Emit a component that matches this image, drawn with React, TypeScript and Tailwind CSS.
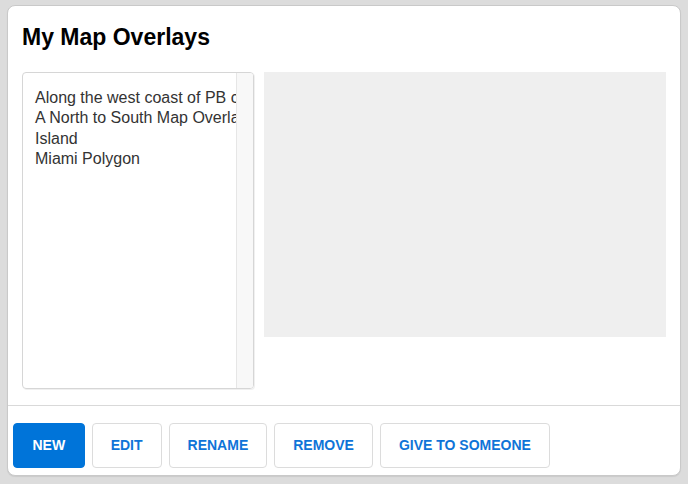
import React from "react";

const items = [
  "Along the west coast of PB county",
  "A North to South Map Overlay",
  "Island",
  "Miami Polygon",
];

const buttons = ["EDIT", "RENAME", "REMOVE", "GIVE TO SOMEONE"];

export default function App() {
  return (
    <div
      className="w-[688px] h-[484px] bg-[#dcdcdc] pt-[5px] pl-[7px]"
      style={{ fontFamily: '"Liberation Sans", Arial, Helvetica, sans-serif' }}
    >
      <div className="w-[674px] h-[471px] bg-white border border-[#c9c9c9] rounded-[8px] flex flex-col shadow-[0_1px_1px_rgba(0,0,0,0.08)]">
        <div className="px-[14px] pt-[17px]">
          <h1 className="text-[23px] leading-[28px] font-bold text-black">My Map Overlays</h1>
          <div className="flex gap-[10px] mt-[21px] items-start">
            <div className="w-[232px] h-[317px] border border-[#d6d6d6] rounded-[4px] flex overflow-hidden shadow-[1px_1px_0_rgba(0,0,0,0.06)]">
              <div className="flex-1 overflow-hidden pl-[12px] pt-[15px] text-[16px] leading-[20.3px] text-[#333]">
                {items.map((t) => (
                  <div key={t} className="whitespace-nowrap">{t}</div>
                ))}
              </div>
              <div className="w-[17px] bg-[#f8f8f8] border-l border-[#e6e6e6]" />
            </div>
            <div className="w-[402px] h-[265px] bg-[#efefef]" />
          </div>
        </div>
        <div className="mt-[16px] border-t border-[#d9d9d9] flex gap-[7px] px-[5px] pt-[17px]">
          <button className="h-[45px] px-[18.5px] rounded-[4px] bg-[#0074d9] border border-[#0074d9] text-white text-[14px] font-bold">
            NEW
          </button>
          {buttons.map((b) => (
            <button
              key={b}
              className="h-[45px] px-[18px] rounded-[4px] bg-white border border-[#dcdcdc] text-[#0f74d8] text-[14px] font-bold"
            >
              {b}
            </button>
          ))}
        </div>
      </div>
    </div>
  );
}
